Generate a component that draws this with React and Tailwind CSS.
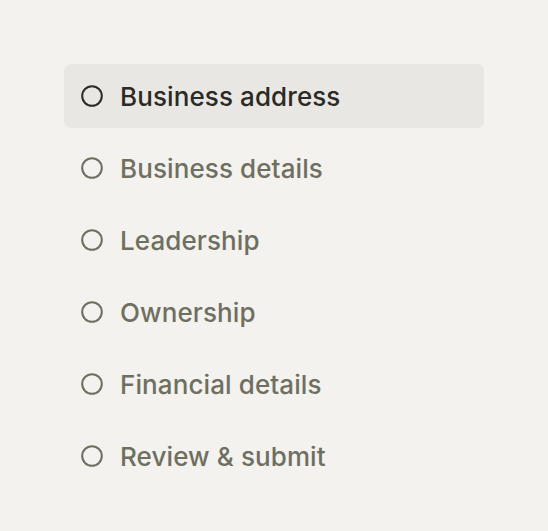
export default function App() {
  const items = [
    "Business address",
    "Business details",
    "Leadership",
    "Ownership",
    "Financial details",
    "Review & submit",
  ];
  return (
    <div className="w-[548px] h-[531px] bg-[#f3f2ee] pt-[64px] pl-[64px]" style={{ fontFamily: "Inter, 'Noto Sans', sans-serif" }}>
      <ul className="flex flex-col gap-[8px] w-[420px]">
        {items.map((t, i) => (
          <li
            key={t}
            className={`flex items-center h-[64px] pl-[17px] rounded-[7px] ${i === 0 ? "bg-[#e8e7e3] text-[#2b2a24]" : "text-[#6e6f61]"}`}
          >
            <svg width="22" height="22" viewBox="0 0 22 22" className="shrink-0">
              <circle cx="11" cy="11" r="9.8" fill="none" stroke="currentColor" strokeWidth="2" />
            </svg>
            <span className="ml-[17px] text-[26px] leading-none font-medium tracking-[0.1px] pt-[2px]">{t}</span>
          </li>
        ))}
      </ul>
    </div>
  );
}
